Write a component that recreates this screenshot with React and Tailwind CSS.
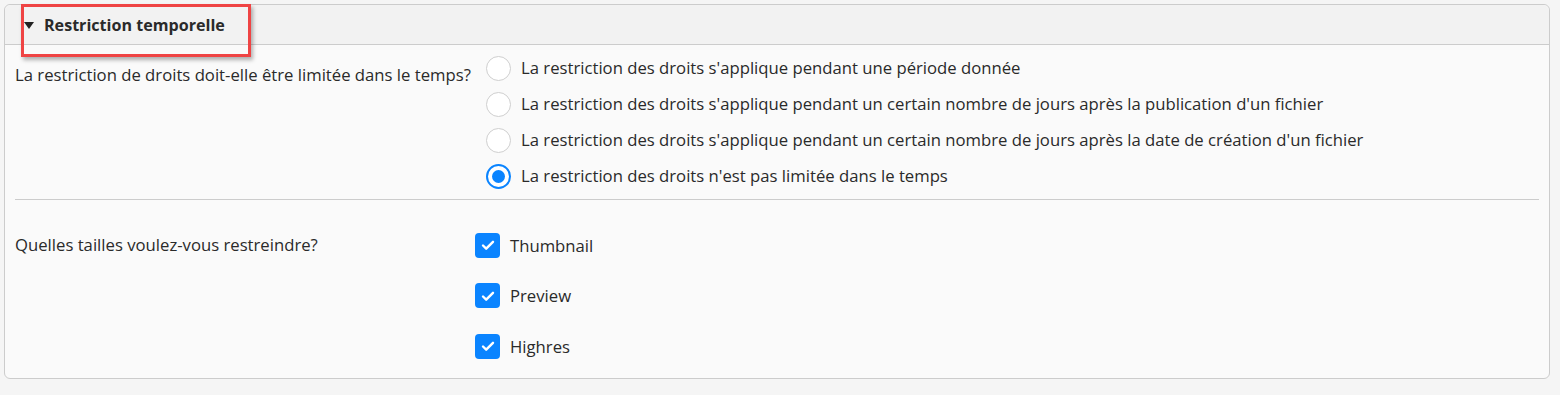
import React from "react";

const radios = [
  { label: "La restriction des droits s'applique pendant une période donnée", checked: false },
  { label: "La restriction des droits s'applique pendant un certain nombre de jours après la publication d'un fichier", checked: false },
  { label: "La restriction des droits s'applique pendant un certain nombre de jours après la date de création d'un fichier", checked: false },
  { label: "La restriction des droits n'est pas limitée dans le temps", checked: true },
];

const sizes = ["Thumbnail", "Preview", "Highres"];

function Radio({ checked }) {
  return checked ? (
    <span className="w-[25px] h-[25px] rounded-full border-2 border-[#0a84ff] bg-white flex items-center justify-center shrink-0">
      <span className="w-[13px] h-[13px] rounded-full bg-[#0a84ff]" />
    </span>
  ) : (
    <span className="w-[25px] h-[25px] rounded-full border border-[#cfcfcf] bg-white shrink-0" />
  );
}

function Check() {
  return (
    <span className="w-[25px] h-[25px] rounded-[4px] bg-[#0a84ff] flex items-center justify-center shrink-0">
      <svg width="16" height="16" viewBox="0 0 16 16" fill="none">
        <path d="M3 8.5l3.2 3.2L13 4.8" stroke="white" strokeWidth="2.4" strokeLinecap="round" strokeLinejoin="round" />
      </svg>
    </span>
  );
}

export default function App() {
  return (
    <div className="bg-[#f5f5f5] h-[395px] p-1 text-[#2a2a2a] text-[16.7px]" style={{ fontFamily: "'Open Sans', sans-serif" }}>
      <div className="relative w-[1546px] border border-[#cccccc] rounded-[6px] bg-[#fafafa]">
        <div className="h-[40px] bg-[#f2f2f2] border-b border-[#cccccc] rounded-t-[6px] flex items-center pl-[19px] pt-[2px]">
          <svg width="10" height="7" viewBox="0 0 10 7" className="mr-[10px]">
            <path d="M0 0h10L5 7z" fill="#222" />
          </svg>
          <span className="font-bold text-[16.1px]">Restriction temporelle</span>
        </div>
        <div className="absolute left-[16px] top-[-1px] w-[230px] h-[53px] border-[3px] border-[#ef4444] shadow-[2px_3px_4px_rgba(0,0,0,0.3)]" />
        <div className="pl-[10px] pr-[10px]">
          <div className="flex pt-[5px] pb-[5px] border-b border-[#cccccc]">
            <div className="w-[471px] pt-[13px] leading-[24px] whitespace-nowrap">La restriction de droits doit-elle être limitée dans le temps?</div>
            <div className="flex flex-col">
              {radios.map((r, i) => (
                <div key={i} className="h-[36px] flex items-center gap-[10px]">
                  <Radio checked={r.checked} />
                  <span>{r.label}</span>
                </div>
              ))}
            </div>
          </div>
          <div className="flex pt-[20px] pb-[6px]">
            <div className="w-[460px] pt-[13px] leading-[24px]">Quelles tailles voulez-vous restreindre?</div>
            <div className="flex flex-col">
              {sizes.map((s) => (
                <div key={s} className="h-[50.5px] flex items-center gap-[10px]">
                  <Check />
                  <span>{s}</span>
                </div>
              ))}
            </div>
          </div>
        </div>
      </div>
    </div>
  );
}
